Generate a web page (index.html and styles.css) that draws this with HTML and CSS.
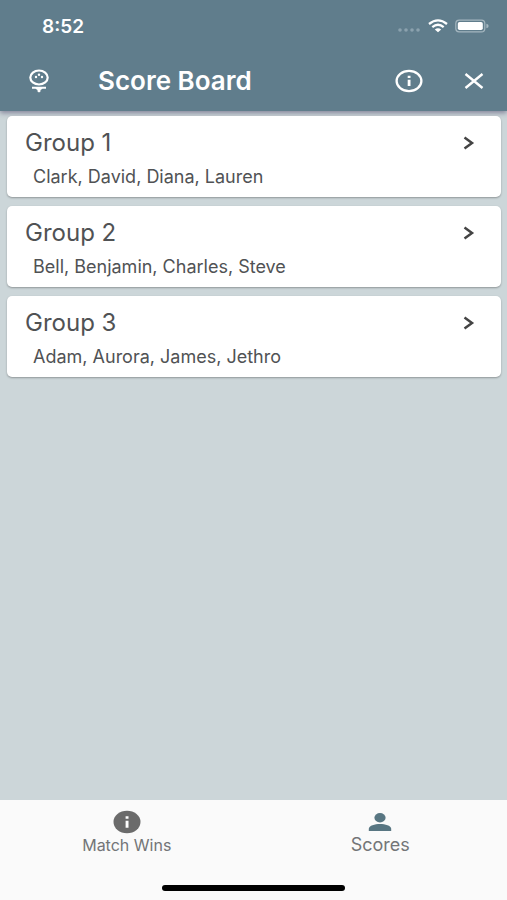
FILE: index.html
```html
<!DOCTYPE html>
<html lang="en">
<head>
<meta charset="utf-8">
<meta name="viewport" content="width=device-width, initial-scale=1">
<title>Score Board</title>
<link rel="stylesheet" href="styles.css">
</head>
<body>
<div class="app">
  <header class="header">
    <div class="status">
      <time class="clock">8:52</time>
      <div class="indicators">
        <svg width="24" height="6" viewBox="0 0 24 6" fill="#8ba2ae" aria-hidden="true"><circle cx="3" cy="3" r="1.8"/><circle cx="9" cy="3" r="1.8"/><circle cx="15" cy="3" r="1.8"/><circle cx="21" cy="3" r="1.8"/></svg>
        <svg width="20" height="14" viewBox="0 0 20 14" fill="none" stroke="#fff" stroke-width="2.3" aria-hidden="true"><path d="M1 5Q10-2.2 19 5M4.3 8.1Q10 3.500 15.700 8.100"/><path d="M6.800 10.400Q10 8 13.200 10.400L10 13.200z" fill="#fff" stroke="none"/></svg>
        <svg width="34" height="14" viewBox="0 0 34 14" aria-hidden="true"><rect x=".8" y="1.2" width="29" height="11.6" rx="3.4" fill="none" stroke="#a4b6bf" stroke-width="1.2"/><rect x="2.8" y="3" width="25" height="8" rx="1.8" fill="#fff"/><path d="M31.4 4.8q2.2.5 2.2 2.2t-2.2 2.2z" fill="#a4b6bf"/></svg>
      </div>
    </div>
    <div class="toolbar">
      <button class="tool" type="button" aria-label="Golf">
        <svg width="22" height="24" viewBox="0 0 22 24" fill="none" stroke="#fff" aria-hidden="true"><ellipse cx="11" cy="8.500" rx="8.700" ry="7" stroke-width="2.200"/><path d="M4 17.800h14v2h-3.500L12.500 21v1.500L11 23.600l-1.500-1.100V21l-2-1.200H4z" fill="#fff" stroke="none"/><g fill="#fff" stroke="none"><circle cx="11" cy="5.700" r="1.200"/><circle cx="8" cy="8" r="1.200"/><circle cx="14" cy="8" r="1.200"/></g></svg>
      </button>
      <h1 class="title">Score Board</h1>
      <button class="tool" type="button" aria-label="Information">
        <svg width="28" height="24" viewBox="0 0 28 24" aria-hidden="true"><ellipse cx="14" cy="12" rx="12.400" ry="10.200" fill="none" stroke="#fff" stroke-width="2.300"/><path d="M12.700 6.700h2.800V9h-2.800zM12.700 10.800h2.800v6.300h-2.800z" fill="#fff"/></svg>
      </button>
      <button class="tool" type="button" aria-label="Close">
        <svg width="20" height="18" viewBox="0 0 20 18" fill="none" stroke="#fff" stroke-width="2.400" aria-hidden="true"><path d="M1.500 2 18.500 16M18.500 2 1.500 16"/></svg>
      </button>
    </div>
  </header>
  <main class="groups">
    <a class="card" href="#group-1">
      <span class="row"><span class="name">Group 1</span><svg width="12" height="14" viewBox="0 0 12 14" fill="none" stroke="#444" stroke-width="2.500" aria-hidden="true"><path d="M1.500 1.500 9 7l-7.500 5.500"/></svg></span>
      <span class="members">Clark, David, Diana, Lauren</span>
    </a>
    <a class="card" href="#group-2">
      <span class="row"><span class="name">Group 2</span><svg width="12" height="14" viewBox="0 0 12 14" fill="none" stroke="#444" stroke-width="2.500" aria-hidden="true"><path d="M1.500 1.500 9 7l-7.500 5.500"/></svg></span>
      <span class="members">Bell, Benjamin, Charles, Steve</span>
    </a>
    <a class="card" href="#group-3">
      <span class="row"><span class="name">Group 3</span><svg width="12" height="14" viewBox="0 0 12 14" fill="none" stroke="#444" stroke-width="2.500" aria-hidden="true"><path d="M1.500 1.500 9 7l-7.500 5.500"/></svg></span>
      <span class="members">Adam, Aurora, James, Jethro</span>
    </a>
  </main>
  <footer class="footer">
    <nav class="tabs">
      <a class="tab" href="#wins">
        <svg width="28" height="24" viewBox="0 0 28 24" aria-hidden="true"><ellipse cx="14" cy="12" rx="13.500" ry="11.200" fill="#6b6b6b"/><path d="M12.600 6.300h2.900v2.500h-2.900zM12.600 10.800h2.900v7h-2.900z" fill="#fff"/></svg>
        <span>Match Wins</span>
      </a>
      <a class="tab active" href="#scores" aria-current="page">
        <svg width="28" height="24" viewBox="0 0 28 24" fill="#587682" aria-hidden="true"><ellipse cx="14" cy="7.700" rx="5.600" ry="4.700"/><path d="M2.800 21v-2.200C2.800 15.500 9 14 14 14s11.200 1.500 11.200 4.800V21z"/></svg>
        <span>Scores</span>
      </a>
    </nav>
    <div class="home-bar"></div>
  </footer>
</div>
</body>
</html>
```
FILE: styles.css
```css
* {
  box-sizing: border-box;
}

body {
  margin: 0;
  font-family: Inter, "Liberation Sans", sans-serif;
  background: #ccd6d9;
  color: #505254;
}

a {
  color: inherit;
  text-decoration: none;
}

svg {
  display: block;
  flex: none;
}

.app {
  display: flex;
  flex-direction: column;
  min-height: 100vh;
}

.header {
  background: #607d8c;
  color: #fff;
  box-shadow: 0 2px 5px rgba(60, 50, 90, 0.5);
}

.status {
  display: flex;
  align-items: center;
  justify-content: space-between;
  height: 52px;
  padding: 0 18px 0 42px;
}

.clock {
  font-size: 19px;
  font-weight: 600;
}

.indicators {
  display: flex;
  align-items: center;
  gap: 7px;
}

.indicators svg:first-child {
  margin-top: 8px;
}

.toolbar {
  display: flex;
  align-items: center;
  height: 59px;
  padding: 0 12px 2px 18px;
}

.tool {
  display: flex;
  align-items: center;
  justify-content: center;
  width: 42px;
  height: 42px;
  padding: 0;
  border: 0;
  background: none;
}

.title {
  flex: 1;
  margin: 0;
  padding-left: 38px;
  font-size: 26px;
  font-weight: 600;
  line-height: 30px;
}

.tool + .tool {
  margin-left: 23px;
}

.groups {
  display: flex;
  flex: 1;
  flex-direction: column;
  gap: 9px;
  padding: 5px 6px 20px 7px;
}

.card {
  display: flex;
  flex-direction: column;
  gap: 8px;
  padding: 12px 26px 8px 18px;
  border-radius: 5px;
  background: #fff;
  box-shadow: 0 1px 2px rgba(0, 0, 0, 0.3);
}

.row {
  display: flex;
  align-items: center;
  justify-content: space-between;
}

.name {
  font-size: 24px;
  line-height: 29px;
}

.members {
  padding-left: 8px;
  font-size: 18px;
  line-height: 24px;
}

.footer {
  background: #fafafa;
  color: #737577;
}

.tabs {
  display: flex;
  height: 85px;
}

.tab {
  display: flex;
  flex: 1;
  flex-direction: column;
  align-items: center;
  gap: 1px;
  padding-top: 10px;
  font-size: 16px;
  line-height: 20px;
}

.tab.active {
  font-size: 18px;
}

.home-bar {
  width: 36%;
  height: 6px;
  margin: 0 auto 9px;
  border-radius: 3px;
  background: #000;
}
```
